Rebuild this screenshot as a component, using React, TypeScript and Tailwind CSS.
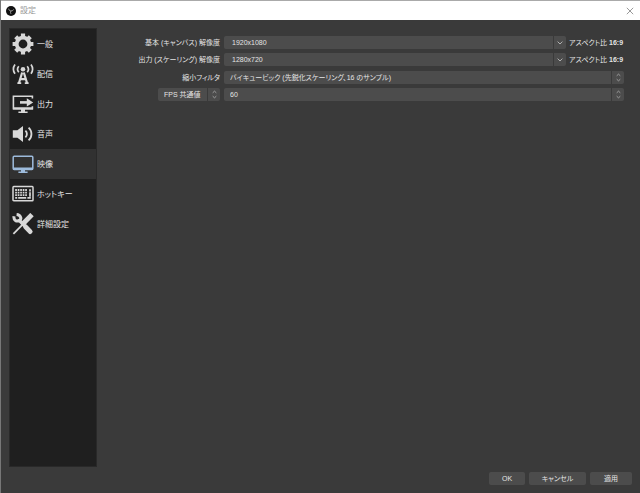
import * as React from "react"
import { clsx } from "clsx"

interface IconProps {
  className?: string
}

function GearIcon({ className }: IconProps) {
  return (
    <svg viewBox="0 0 22 22" className={className} fill="none" stroke="currentColor" aria-hidden="true">
      <circle cx="11" cy="11" r="6.3" strokeWidth="3.8" />
      <g strokeWidth="4.2">
        <path d="M11 .6v3.4M11 18v3.4M.6 11H4M18 11h3.4" />
        <path d="M3.7 3.7l2.3 2.3M16 16l2.3 2.3M3.7 18.3L6 16M16 6l2.3-2.3" />
      </g>
    </svg>
  )
}

function AntennaIcon({ className }: IconProps) {
  return (
    <svg viewBox="0 0 22 22" className={className} fill="none" stroke="currentColor" aria-hidden="true">
      <circle cx="11" cy="6.2" r="2.3" fill="currentColor" stroke="none" />
      <path strokeWidth="1.7" d="M6.8 3.2a4.6 4.6 0 0 0 0 6M15.2 3.2a4.6 4.6 0 0 1 0 6M3 1.6a8 8 0 0 0 0 9.2M19 1.6a8 8 0 0 1 0 9.2" />
      <path strokeWidth="2.2" d="M10.2 9.5L6.8 20.5M11.8 9.5l3.4 11M8.5 16.2h5" />
      <path strokeWidth="1.8" d="M5.4 20.2h3.8M12.8 20.2h3.8" />
    </svg>
  )
}

function OutputIcon({ className }: IconProps) {
  return (
    <svg viewBox="0 0 22 22" className={className} fill="none" stroke="currentColor" aria-hidden="true">
      <path strokeWidth="1.6" d="M20.4 5.5V3.2H1.4v12.6h19v-2.6" />
      <path strokeWidth="2.6" d="M8 9.4h8" />
      <path fill="currentColor" stroke="none" d="M14.8 5.2l6.4 4.2-6.4 4.2zM1 14.2h20v2.2H1zM9 16.4h4v2h2.6v1.6H6.4v-1.6H9z" />
    </svg>
  )
}

function SpeakerIcon({ className }: IconProps) {
  return (
    <svg viewBox="0 0 22 22" className={className} fill="none" stroke="currentColor" aria-hidden="true">
      <path fill="currentColor" stroke="none" d="M.8 7.2h4.6L11 3v16l-5.6-4.2H.8z" />
      <path strokeWidth="1.8" d="M13.4 7.6a4.6 4.6 0 0 1 0 6.8M16.6 4.6a8.6 8.6 0 0 1 0 12.8" />
    </svg>
  )
}

function MonitorIcon({ className }: IconProps) {
  return (
    <svg viewBox="0 0 22 22" className={className} fill="none" stroke="currentColor" aria-hidden="true">
      <rect x="1.2" y="3.2" width="19.6" height="13.4" rx="1" strokeWidth="1.5" />
      <path fill="currentColor" stroke="none" d="M1 14.6h20v2.4H1zM9 16.8h4v1.6h2.6V20H6.4v-1.6H9z" />
    </svg>
  )
}

function KeyboardIcon({ className }: IconProps) {
  return (
    <svg viewBox="0 0 22 22" className={className} fill="none" stroke="currentColor" aria-hidden="true">
      <rect x="1" y="3.6" width="20" height="14.2" rx=".8" strokeWidth="1.5" />
      <path strokeWidth="1.8" strokeDasharray="1.7 .8" d="M3.2 7h12.2M3.2 9.6h12.2M3.2 12.2h12.2" />
      <path strokeWidth="1.7" d="M3.2 14.8h2M6.2 14.8h8M15.4 14.8h3.4M18 6.2v2.2M18 9.2v4.6" />
    </svg>
  )
}

function ToolsIcon({ className }: IconProps) {
  return (
    <svg viewBox="0 0 22 22" className={className} fill="none" stroke="currentColor" aria-hidden="true">
      <path strokeWidth="4.8" strokeLinecap="round" d="M13.6 13.8l4.6 4.8" />
      <path strokeWidth="3.4" d="M6.6 6.6l6.4 6.6" />
      <path strokeWidth="3" d="M2 3.2C1.4 7.4 4.6 9 7.4 7.4S8.6 2 4.6 1.6" />
      <path strokeWidth="1.8" d="M1.4 20.8L12 10.2" />
      <path strokeWidth="4.8" d="M11 10.8l9-9.2" />
    </svg>
  )
}

function LogoIcon({ className }: IconProps) {
  return (
    <svg viewBox="0 0 20 20" className={className} aria-hidden="true">
      <circle cx="10" cy="10" r="10" fill="#111" />
      <path fill="none" stroke="#aaa" strokeWidth="1.8" d="M5.4 5.4c.4 3 2.2 4.4 4.6 4.6 2.6-.2 4.2-1.4 5.4-3M10 10c-1.4 2-1.2 4 .2 5.8" />
    </svg>
  )
}

function ChevronIcon({ className }: IconProps) {
  return (
    <svg viewBox="0 0 6 4" className={className} fill="none" stroke="currentColor" aria-hidden="true">
      <path d="M.6.6L3 3 5.4.6" />
    </svg>
  )
}

function StepperIcon({ className }: IconProps) {
  return (
    <svg viewBox="0 0 6 10" className={className} fill="none" stroke="currentColor" aria-hidden="true">
      <path d="M.8 3L3 1l2.2 2M.8 7L3 9l2.2-2" />
    </svg>
  )
}

const sections = [
  { label: "一般", Icon: GearIcon },
  { label: "配信", Icon: AntennaIcon },
  { label: "出力", Icon: OutputIcon },
  { label: "音声", Icon: SpeakerIcon },
  { label: "映像", Icon: MonitorIcon },
  { label: "ホットキー", Icon: KeyboardIcon },
  { label: "詳細設定", Icon: ToolsIcon },
]

interface SelectProps {
  id?: string
  label?: string
  value: string
}

function Select({ id, label, value }: SelectProps) {
  return (
    <div className="flex h-[13px] min-w-0 flex-1 overflow-hidden rounded-xs bg-[#4c4c4c]">
      <select
        id={id}
        aria-label={label}
        className="min-w-0 flex-1 appearance-none bg-transparent pl-1.5 leading-[13px] outline-none"
      >
        <option>{value}</option>
      </select>
      <span className="pointer-events-none flex w-[13px] items-center justify-center border-l border-[#3a3a3a] text-[#b0b0b0]">
        <StepperIcon className="h-[9px] w-[5px]" />
      </span>
    </div>
  )
}

interface ResolutionProps {
  id: string
  label: string
  value: string
}

function ResolutionRow({ id, label, value }: ResolutionProps) {
  return (
    <div className="flex h-[13px] items-center">
      <label htmlFor={id} className="w-[123px] shrink-0 pr-1 text-right">
        {label}
      </label>
      <div className="flex h-[13px] flex-1 overflow-hidden rounded-xs bg-[#4c4c4c]">
        <input id={id} defaultValue={value} className="min-w-0 flex-1 bg-transparent px-2 outline-none" />
        <button
          type="button"
          aria-label={`${label} の候補`}
          className="flex w-[13px] items-center justify-center border-l border-[#3a3a3a] text-[#b0b0b0]"
        >
          <ChevronIcon className="h-1 w-1.5" />
        </button>
      </div>
      <p className="w-[58px] shrink-0 pl-[3px] whitespace-nowrap">
        アスペクト比 <b>16:9</b>
      </p>
    </div>
  )
}

export default function App() {
  const [active, setActive] = React.useState("映像")

  return (
    <div
      lang="ja"
      className="flex min-h-screen flex-col border-l border-[#777] bg-[#3a3a3a] font-['Liberation_Sans','Noto_Sans_CJK_JP',sans-serif] text-[7px] leading-[13px] text-[#e4e4e4] [font-feature-settings:'palt']"
    >
      {/* Title bar */}
      <header className="flex h-5 items-center border-t border-[#aaa] bg-white pr-1.5 pl-[5px]">
        <LogoIcon className="size-2.5" />
        <h1 className="pl-1 text-[8px] text-[#999]">設定</h1>
        <button type="button" aria-label="閉じる" className="ml-auto text-[#999]">
          <svg viewBox="0 0 8 8" className="size-2" fill="none" stroke="currentColor" aria-hidden="true">
            <path d="M.8.8l6.4 6.4M7.2.8L.8 7.2" />
          </svg>
        </button>
      </header>

      <div className="flex flex-1 px-2 pt-2">
        {/* Sections */}
        <nav className="w-[88px] shrink-0 border border-[#292929] bg-[#1f1f1f] text-[8px]">
          {sections.map(({ label, Icon }) => (
            <button
              key={label}
              type="button"
              onClick={() => setActive(label)}
              className={clsx(
                "flex h-[30px] w-full items-center gap-[3px] pl-0.5 whitespace-nowrap",
                active === label && "bg-[#313131]"
              )}
            >
              <Icon className={clsx("size-[22px] shrink-0", active === label ? "text-[#9dbbdc]" : "text-[#d8d8d8]")} />
              {label}
            </button>
          ))}
        </nav>

        {/* Video settings */}
        <main className="flex flex-1 flex-col gap-[5px] pt-2 pr-2 pl-1">
          <div className="flex flex-col gap-1">
            <ResolutionRow id="base" label="基本 (キャンバス) 解像度" value="1920x1080" />
            <ResolutionRow id="scaled" label="出力 (スケーリング) 解像度" value="1280x720" />
          </div>
          <div className="flex flex-col gap-1">
            <div className="flex items-center">
              <label htmlFor="filter" className="w-[123px] shrink-0 pr-1 text-right">
                縮小フィルタ
              </label>
              <Select id="filter" value="バイキュービック (先鋭化スケーリング、16 のサンプル)" />
            </div>
            <div className="flex items-center">
              <div className="flex w-[123px] shrink-0 pr-1 pl-[57px]">
                <Select label="FPS の種類" value="FPS 共通値" />
              </div>
              <Select label="FPS 共通値" value="60" />
            </div>
          </div>
        </main>
      </div>

      <footer className="flex justify-end gap-1 px-2 pt-[5px] pb-2">
        <button type="button" className="h-[13px] w-9 rounded-xs bg-[#4c4c4c]">OK</button>
        <button type="button" className="h-[13px] w-[57px] rounded-xs bg-[#4c4c4c]">キャンセル</button>
        <button type="button" className="h-[13px] w-[42px] rounded-xs bg-[#4c4c4c]">適用</button>
      </footer>
    </div>
  )
}
